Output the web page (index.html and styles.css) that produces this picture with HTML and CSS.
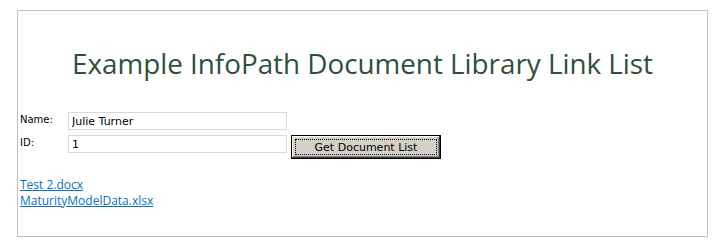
FILE: index.html
```html
<!DOCTYPE html>
<html lang="en">
<head>
    <meta charset="UTF-8">
    <meta name="viewport" content="width=device-width, initial-scale=1.0">
    <title>Document Library Link List</title>
    <link rel="stylesheet" href="styles.css">
</head>
<body>
    <div class="form">
        <h1 class="title">Example InfoPath Document Library Link List</h1>

        <div class="fields">
            <div class="row">
                <label for="name">Name:</label>
                <input type="text" id="name" value="Julie Turner">
            </div>
            <div class="row">
                <label for="docid">ID:</label>
                <input type="text" id="docid" value="1">
                <button class="get-list">Get Document List</button>
            </div>
        </div>

        <div class="links">
            <a href="#">Test 2.docx</a>
            <a href="#">MaturityModelData.xlsx</a>
        </div>
    </div>
</body>
</html>
```

FILE: styles.css
```css
body {
    margin: 10px 0 0 17px;
    background: #fff;
}

.form {
    width: 689px;
    height: 225px;
    border: 1px solid #c0c0c0;
    box-sizing: content-box;
}

.title {
    margin: 34px 0 0 0;
    text-align: center;
    font-family: "Open Sans", sans-serif;
    font-weight: normal;
    font-size: 27.8px;
    line-height: 36px;
    color: #2f4f3a;
}

.fields {
    margin: 31px 0 0 2px;
}

.row {
    display: flex;
    align-items: flex-start;
    height: 23px;
}

label {
    width: 48px;
    padding-top: 1px;
    font-family: "DejaVu Sans", Verdana, sans-serif;
    font-size: 10px;
    line-height: 14px;
    color: #000;
}

input {
    width: 219px;
    height: 18px;
    padding: 0 3px;
    border: 1px solid #d8d8d8;
    box-sizing: border-box;
    font-family: "DejaVu Sans", Verdana, sans-serif;
    font-size: 11px;
    outline: none;
}

.get-list {
    margin-left: 4px;
    width: 150px;
    height: 24px;
    background: #d4d0c8;
    border: 1px solid #000;
    box-shadow: inset -1px -1px 0 #404040, inset 1px 1px 0 #fff, inset -2px -2px 0 #808080;
    outline: 1px dotted #000;
    outline-offset: -5px;
    font-family: "DejaVu Sans", Verdana, sans-serif;
    font-size: 11px;
    color: #000;
    padding: 0;
}

.links {
    margin: 19px 0 0 2px;
    display: flex;
    flex-direction: column;
}

.links a {
    font-family: "Open Sans", sans-serif;
    font-size: 12px;
    line-height: 16px;
    color: #0a6ebd;
}
```
